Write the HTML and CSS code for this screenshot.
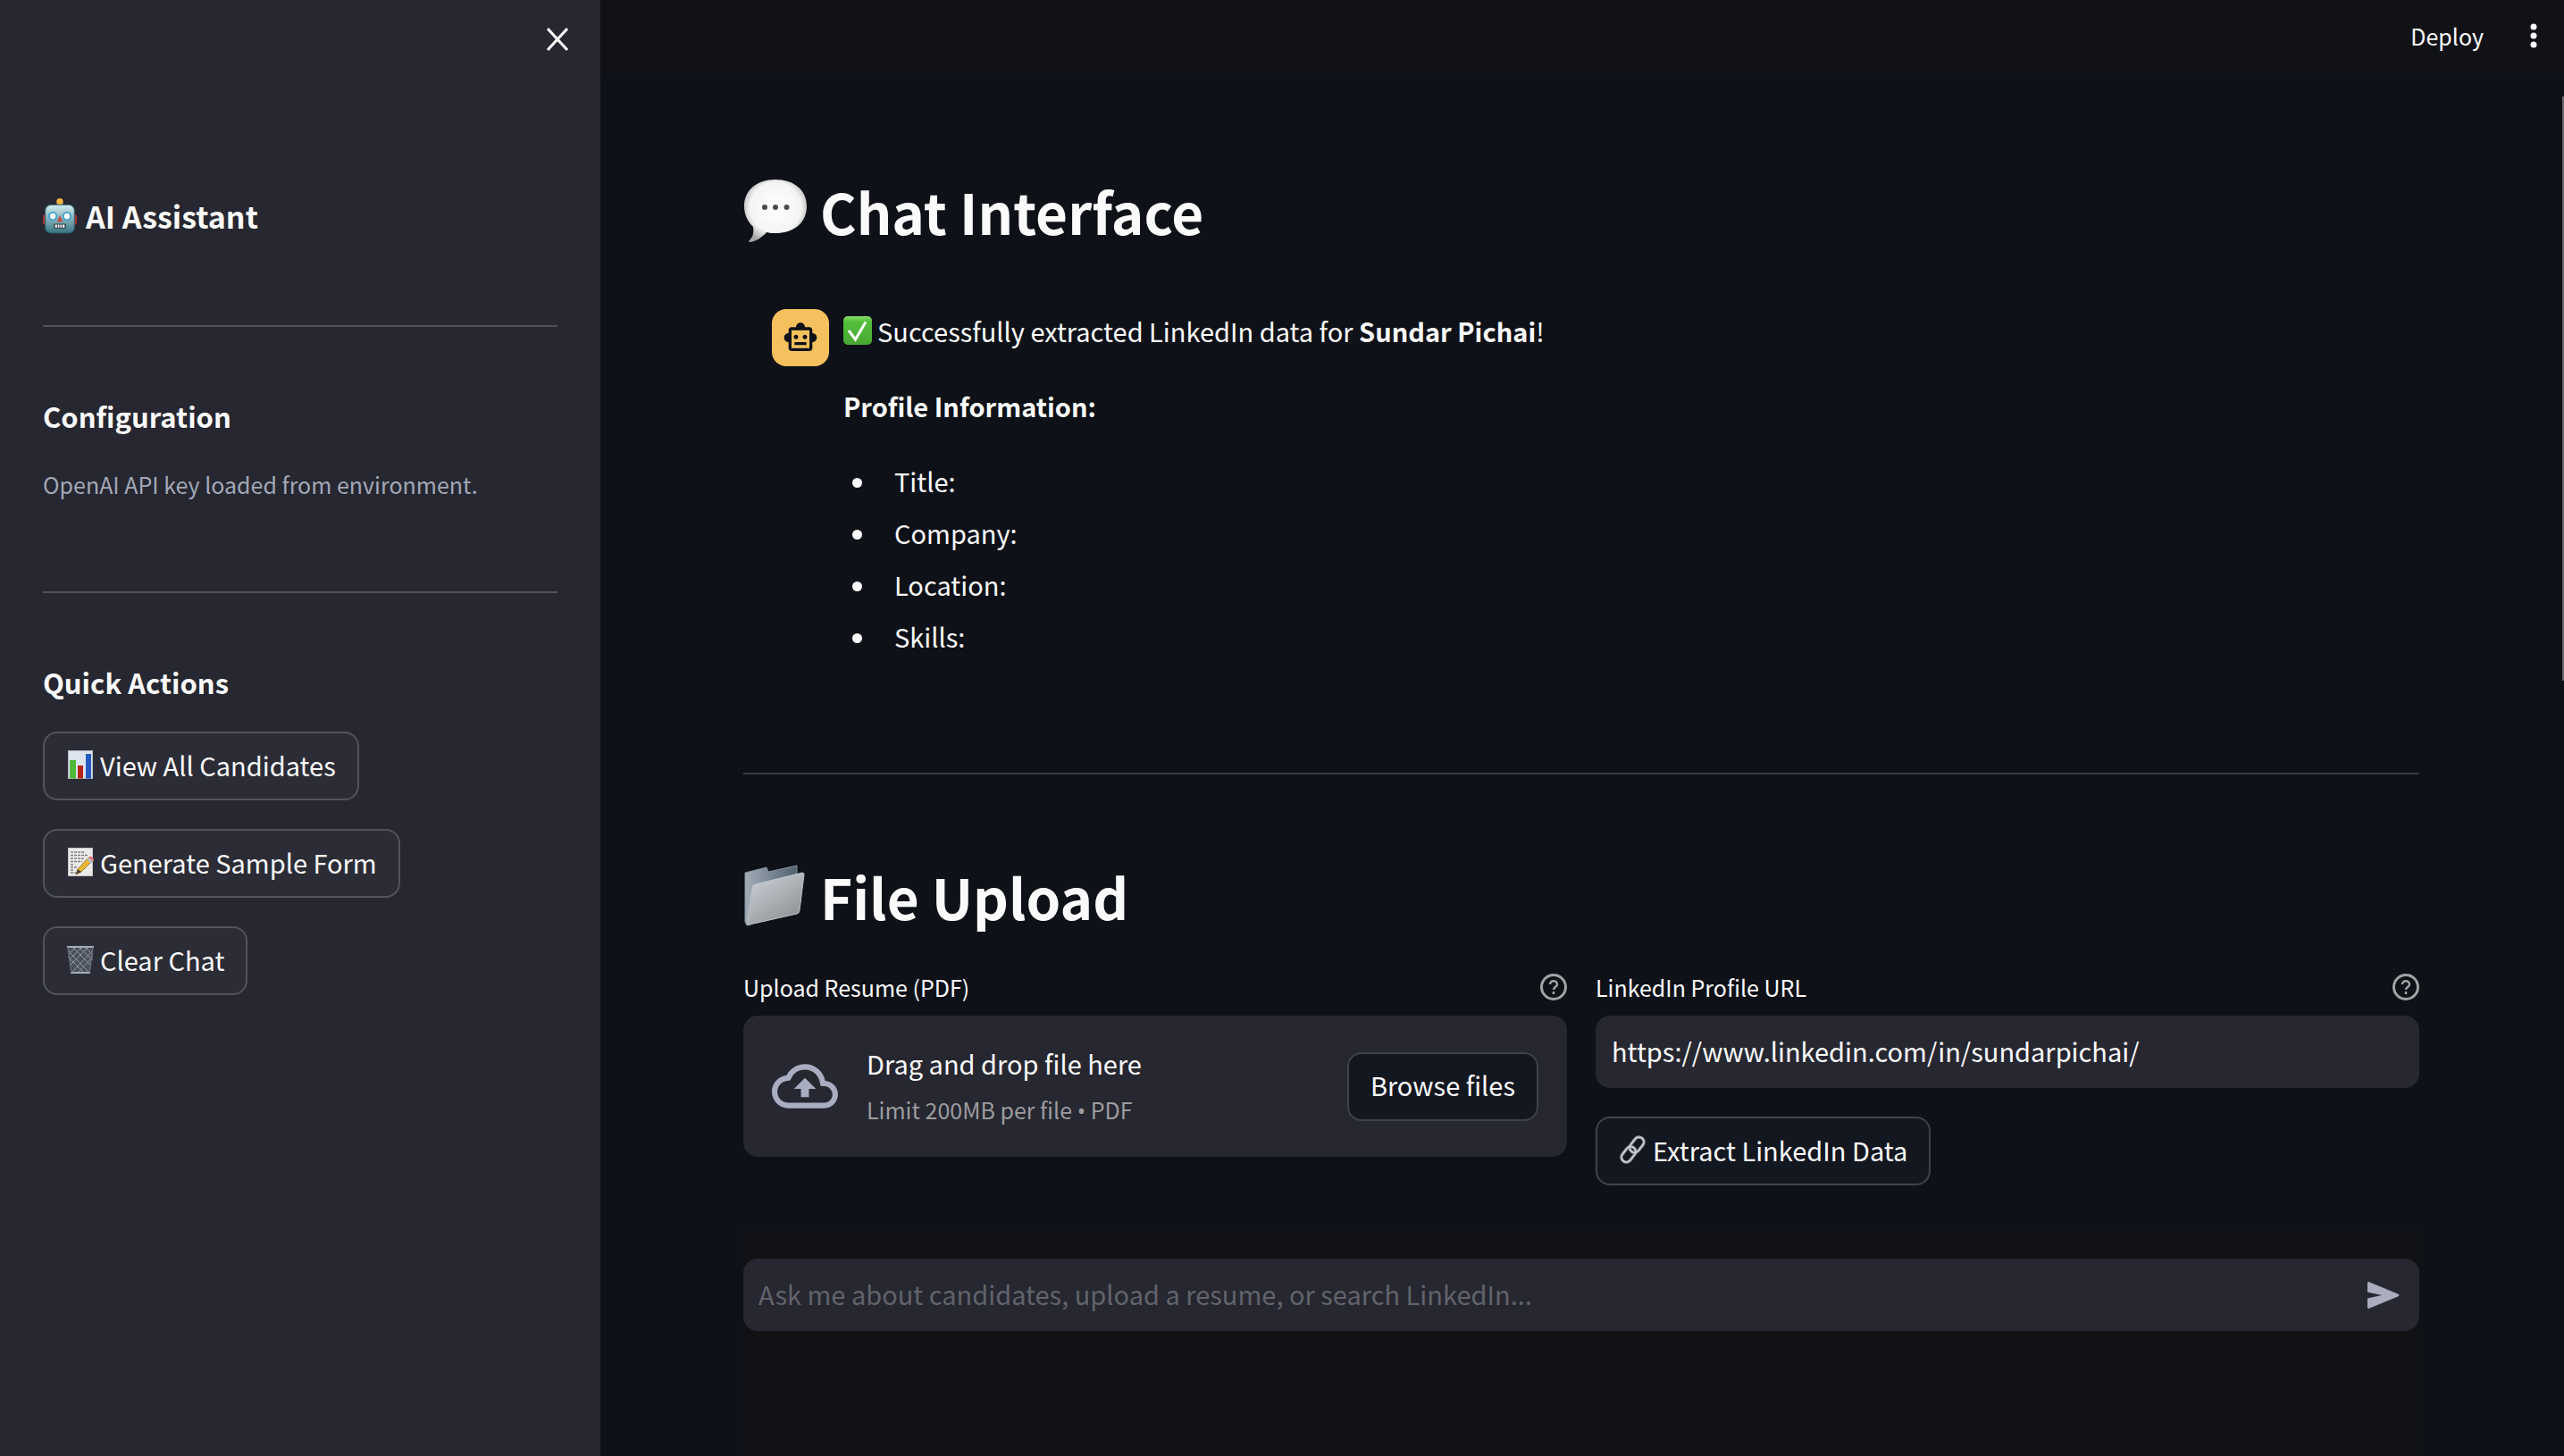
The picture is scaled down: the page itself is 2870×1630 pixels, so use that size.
FILE: index.html
```html
<!DOCTYPE html>
<html lang="en">
<head>
<meta charset="utf-8">
<title>Chat Interface</title>
<link rel="stylesheet" href="styles.css">
</head>
<body>
<div class="app">
  <aside class="sidebar">
    <div class="sidebar-top">
      <button class="icon-button" type="button" aria-label="Close sidebar">
        <svg class="icon-close" viewBox="0 0 24 26" fill="none" stroke="currentColor" stroke-width="3"><path d="M1 1l22 24M23 1L1 25"/></svg>
      </button>
    </div>
    <h2 class="brand">
      <svg class="emoji-brand" viewBox="0 0 36 38">
        <defs><linearGradient id="robot" x1="0" y1="0" x2="0" y2="1"><stop offset="0" stop-color="#d3edf0"/><stop offset=".45" stop-color="#8bb9c1"/><stop offset="1" stop-color="#37717f"/></linearGradient></defs>
        <rect x="0" y="17" width="5" height="11" rx="2" fill="#a63434"/><rect x="31" y="17" width="5" height="11" rx="2" fill="#a63434"/>
        <path d="M14 8V5h8v3z" fill="#60477f"/><circle cx="18" cy="3.500" r="3.500" fill="#f4b63d"/>
        <rect x="2.500" y="7" width="31" height="30" rx="6" fill="url(#robot)" stroke="#2c5c69"/>
        <g fill="#fff" stroke="#4aa5c9" stroke-width="2"><circle cx="10.500" cy="19" r="4"/><circle cx="25.500" cy="19" r="4"/></g>
        <path d="M18 18l3 7h-6z" fill="#c94c45"/><rect x="11.500" y="27" width="13" height="5" rx="1" fill="#33434a"/>
        <path d="M13 28h2v3h-2zM16 28h1.500v3H16zM18.500 28H20v3h-1.500zM21 28h2v3h-2z" fill="#fff"/>
      </svg>
      <span>AI Assistant</span>
    </h2>
    <hr class="rule">
    <h3 class="section-title">Configuration</h3>
    <p class="caption">OpenAI API key loaded from environment.</p>
    <hr class="rule">
    <h3 class="section-title">Quick Actions</h3>
    <div class="actions">
      <button class="button" type="button">
        <svg class="emoji" viewBox="0 0 32 32">
          <rect x="2.500" y=".500" width="27" height="31" fill="#dce4ee" stroke="#b5bcc7"/>
          <path d="M4 11h7v20.500H4z" fill="#50b93b"/><path d="M13 17h6v14.500h-6z" fill="#b22318"/><path d="M22 4h6v27.500h-6z" fill="#2459c0"/>
        </svg><span>View All Candidates</span>
      </button>
      <button class="button" type="button">
        <svg class="emoji" viewBox="0 0 32 32">
          <rect x="2.500" y=".500" width="27" height="31" fill="#ecebe9" stroke="#c4c4c4"/>
          <path d="M5 5h16M5 8.500h19M5 12h15M5 15.500h13M5 19h4M5 22h7M5 25h4M5 28h6" stroke="#808080" stroke-width="1.500" stroke-dasharray="3 1"/>
          <path d="M11 30l2-6L25 11l4 4-12 12z" fill="#edb92f" stroke="#8c6822" stroke-width=".800"/><path d="M11 30l2-6 4 3z" fill="#514334"/>
          <path d="M23 13l3-3 5 4-3 4z" fill="#b7bcc0"/><path d="M26 10c2-1 5 1 5 4l-1 1-5-4z" fill="#e97676"/>
        </svg><span>Generate Sample Form</span>
      </button>
      <button class="button" type="button">
        <svg class="emoji" viewBox="0 0 32 32">
          <path d="M1 2h30l-4 29H5z" fill="#4c515b"/>
          <path d="M3 7l22 23M2 13l17 17M8 3l20 20M15 3l15 14M22 3l8 8M29 7L7 30M30 13L14 30M24 3L4 23M17 3L3 17M10 3L3 10" stroke="#8e96a2" stroke-width="1"/>
          <path d="M1 2h30M5 31h22" stroke="#a3aebb" stroke-width="2"/><path d="M2 2l4 29M30 2l-4 29" stroke="#69717d" fill="none"/>
        </svg><span>Clear Chat</span>
      </button>
    </div>
  </aside>

  <div class="page">
    <header class="toolbar">
      <button class="deploy" type="button">Deploy</button>
      <button class="icon-button" type="button" aria-label="Menu">
        <svg class="icon-menu" viewBox="0 0 8 28" fill="currentColor"><circle cx="4" cy="4" r="3.500"/><circle cx="4" cy="14" r="3.500"/><circle cx="4" cy="24" r="3.500"/></svg>
      </button>
    </header>

    <main class="content">
      <h1 class="title">
        <svg class="emoji-title" viewBox="0 0 72 72">
          <defs><radialGradient id="bubble" cx=".5" cy=".45" r=".58"><stop offset="0" stop-color="#fff"/><stop offset=".7" stop-color="#f4f4f4"/><stop offset="1" stop-color="#a6a6a6"/></radialGradient></defs>
          <path d="M36 1C57 1 71 13 71 31S57 61 36 61c-3 0-7 0-10-1-5 6-12 10-18 11-2 0-2-1-1-2 4-4 5-9 4-15C5 48 1 40 1 31 1 13 15 1 36 1z" fill="url(#bubble)"/>
          <g fill="#4b4b4b"><circle cx="24" cy="32" r="3"/><circle cx="36" cy="32" r="3"/><circle cx="48.500" cy="32" r="3"/></g>
        </svg>
        <span>Chat Interface</span>
      </h1>

      <article class="message">
        <div class="avatar">
          <svg class="icon-bot" viewBox="0 0 24 24" fill="currentColor"><path d="M20 9V7c0-1.100-.9-2-2-2h-3c0-1.660-1.340-3-3-3S9 3.340 9 5H6c-1.100 0-2 .9-2 2v2c-1.660 0-3 1.340-3 3s1.340 3 3 3v4c0 1.100.9 2 2 2h12c1.100 0 2-.9 2-2v-4c1.660 0 3-1.340 3-3s-1.340-3-3-3zm-2 10H6V7h12v12zm-9-6c-.83 0-1.500-.67-1.500-1.500S8.170 10 9 10s1.500.67 1.500 1.500S9.830 13 9 13zm7.500-1.500c0 .83-.67 1.500-1.500 1.500s-1.500-.67-1.500-1.500.67-1.500 1.500-1.500 1.500.67 1.500 1.500zM8 15h8v2H8v-2z"/></svg>
        </div>
        <div class="message-body">
          <p class="with-emoji">
            <svg class="emoji" viewBox="0 0 32 32">
              <defs><linearGradient id="tick" x1="0" y1="0" x2="0" y2="1"><stop offset="0" stop-color="#8ade6c"/><stop offset=".2" stop-color="#52bf3b"/><stop offset="1" stop-color="#48a832"/></linearGradient></defs>
              <rect width="32" height="32" rx="5" fill="url(#tick)"/><path d="M6 16l7.500 10L25 6.500" fill="none" stroke="#fff" stroke-width="3"/>
            </svg>
            <span>Successfully extracted LinkedIn data for <strong>Sundar Pichai</strong>!</span>
          </p>
          <p><strong>Profile Information:</strong></p>
          <ul class="facts">
            <li>Title:</li>
            <li>Company:</li>
            <li>Location:</li>
            <li>Skills:</li>
          </ul>
        </div>
      </article>

      <hr class="rule">

      <h1 class="title">
        <svg class="emoji-title" viewBox="0 0 72 72">
          <defs><linearGradient id="folder" x1="0" y1="0" x2=".7" y2="1"><stop offset="0" stop-color="#d0d5dc"/><stop offset="1" stop-color="#8e9396"/></linearGradient><linearGradient id="folder-back" x1="0" y1="0" x2="1" y2="0"><stop offset="0" stop-color="#a2adb8"/><stop offset="1" stop-color="#51616f"/></linearGradient></defs>
          <path d="M2 10L26 4l2 5 32-7v12L8 68l-4 1-2-4z" fill="url(#folder-back)" stroke="#8594a1"/>
          <path d="M13 23l53-13q2 0 2 2l-5 40q0 3-3 4L7 68q-2 1-2-2l5-40q0-2 3-3z" fill="url(#folder)" stroke="#bdc3c8"/>
        </svg>
        <span>File Upload</span>
      </h1>

      <div class="columns">
        <section class="field">
          <div class="field-head">
            <label for="resume">Upload Resume (PDF)</label>
            <svg class="icon-help" viewBox="0 0 30 30" fill="none" stroke="currentColor" stroke-width="3"><circle cx="15" cy="15" r="13.500"/><path d="M11 12c0-5 8-5 8 0 0 3-4 3-4 6" stroke-width="2.500"/><path d="M15 20v3" stroke-width="2.500"/></svg>
          </div>
          <div class="dropzone">
            <svg class="icon-cloud" viewBox="0 4 24 16" fill="currentColor"><path d="M19.350 10.040A7.490 7.490 0 0 0 12 4C9.110 4 6.600 5.640 5.350 8.040A5.994 5.994 0 0 0 0 14c0 3.310 2.690 6 6 6h13c2.760 0 5-2.240 5-5 0-2.640-2.050-4.780-4.650-4.960zM19 18H6c-2.210 0-4-1.790-4-4 0-2.050 1.530-3.760 3.560-3.970l1.070-.11.5-.95A5.469 5.469 0 0 1 12 6c2.620 0 4.880 1.860 5.390 4.430l.3 1.500 1.530.11A2.980 2.980 0 0 1 22 15c0 1.650-1.350 3-3 3zM8 13h2.550v3h2.900v-3H16l-4-4z"/></svg>
            <div class="drop-text">
              <span>Drag and drop file here</span>
              <small>Limit 200MB per file <span class="dot">•</span> PDF</small>
            </div>
            <button class="button" type="button" id="resume">Browse files</button>
          </div>
        </section>
        <section class="field">
          <div class="field-head">
            <label for="profile">LinkedIn Profile URL</label>
            <svg class="icon-help" viewBox="0 0 30 30" fill="none" stroke="currentColor" stroke-width="3"><circle cx="15" cy="15" r="13.500"/><path d="M11 12c0-5 8-5 8 0 0 3-4 3-4 6" stroke-width="2.500"/><path d="M15 20v3" stroke-width="2.500"/></svg>
          </div>
          <input class="text-input" id="profile" type="text" value="https://www.linkedin.com/in/sundarpichai/">
          <button class="button extract" type="button">
            <svg class="emoji" viewBox="0 0 32 32" fill="none">
              <g stroke="#8d9298" stroke-width="3.500"><rect x="15" y="1" width="11" height="19" rx="5.500" transform="rotate(38 20 10)"/><rect x="5" y="12" width="11" height="19" rx="5.500" transform="rotate(38 11 22)"/></g>
              <g stroke="#d9dde1" stroke-width="1.200"><rect x="15" y="1" width="11" height="19" rx="5.500" transform="rotate(38 20 10)"/><rect x="5" y="12" width="11" height="19" rx="5.500" transform="rotate(38 11 22)"/></g>
            </svg><span>Extract LinkedIn Data</span>
          </button>
        </section>
      </div>
    </main>

    <footer class="composer">
      <form class="composer-box">
        <input class="composer-input" type="text" aria-label="Message" placeholder="Ask me about candidates, upload a resume, or search LinkedIn...">
        <button class="icon-button send" type="button" aria-label="Send">
          <svg class="icon-send" viewBox="0 0 36 30" fill="currentColor"><path d="M0 1.500Q0-.5 2 .3L34 13.500q3 1.500 0 3L2 29.700Q0 30.500 0 28.500V18.500l16-3.500L0 11.500z"/></svg>
        </button>
      </form>
    </footer>
    <div class="scroll-thumb"></div>
  </div>
</div>
</body>
</html>
```
FILE: styles.css
```css
* { box-sizing: border-box; }

body {
  margin: 0;
  background: #0e1117;
  color: #fafafa;
  font-family: "Noto Sans CJK SC", "Noto Sans", sans-serif;
  font-size: 29px;
  line-height: 48px;
}

h1, h2, h3, p, ul { margin: 0; }

button, input {
  font: inherit;
  color: inherit;
}

button {
  border: 0;
  padding: 0;
  background: none;
}

svg { display: block; flex: none; }

.app {
  display: flex;
  min-height: 100vh;
}

/* Sidebar */
.sidebar {
  flex: none;
  width: 672px;
  padding: 0 48px;
  background: #262730;
}

.sidebar-top {
  display: flex;
  justify-content: flex-end;
  align-items: center;
  height: 88px;
  margin-right: -12px;
}

.icon-button { display: flex; }
.icon-close { width: 24px; height: 26px; }

.brand {
  display: flex;
  align-items: center;
  gap: 10px;
  margin-top: 128px;
  font-size: 34px;
  line-height: 52px;
  font-weight: 700;
}

.emoji-brand { width: 38px; height: 42px; }

.rule {
  height: 2px;
  margin: 96px 0 76px;
  border: 0;
  background: #505159;
}

.section-title {
  font-size: 31px;
  line-height: 48px;
  font-weight: 700;
}

.caption {
  margin-top: 28px;
  color: #a3a8b8;
  font-size: 25px;
  line-height: 48px;
}

.actions {
  display: flex;
  flex-direction: column;
  align-items: flex-start;
  gap: 32px;
  margin-top: 31px;
}

.button {
  display: flex;
  align-items: center;
  gap: 6px;
  height: 77px;
  padding: 0 24px 4px;
  border: 2px solid #52535b;
  border-radius: 16px;
  background: #2b2c36;
  white-space: nowrap;
}

.emoji { width: 32px; height: 32px; }

/* Page */
.page {
  position: relative;
  flex: 1;
  display: flex;
  flex-direction: column;
  min-width: 0;
}

.toolbar {
  display: flex;
  justify-content: flex-end;
  align-items: center;
  gap: 52px;
  height: 84px;
  padding: 0 30px 4px 0;
  background: #111216;
}

.deploy { font-size: 25px; }
.icon-menu { width: 8px; height: 28px; }

.content {
  flex: 1;
  padding: 100px 162px 0 160px;
}

.title {
  display: flex;
  align-items: center;
  gap: 14px;
  font-size: 62px;
  line-height: 104px;
  font-weight: 700;
}

.emoji-title { width: 72px; height: 72px; }

.message {
  display: flex;
  gap: 16px;
  padding: 58px 32px 33px;
}

.avatar {
  display: flex;
  align-items: center;
  justify-content: center;
  flex: none;
  width: 64px;
  height: 64px;
  border-radius: 16px;
  background: #f5c05e;
  color: #0e1117;
}

.icon-bot { width: 40px; height: 40px; }

.message-body {
  display: flex;
  flex-direction: column;
  gap: 36px;
}

.with-emoji {
  display: flex;
  align-items: center;
  gap: 6px;
}

.facts {
  display: grid;
  gap: 10px;
  padding-left: 39px;
}

.facts li { padding-left: 18px; }

.content .rule {
  margin-bottom: 84px;
  background: #3a3c42;
}

.columns {
  display: grid;
  grid-template-columns: 1fr 1fr;
  gap: 32px;
  margin-top: 26px;
}

.field-head {
  display: flex;
  justify-content: space-between;
  align-items: center;
  height: 48px;
  margin-bottom: 8px;
  font-size: 25px;
}

.icon-help { width: 30px; height: 30px; color: #a3a3a6; }

.dropzone {
  display: flex;
  align-items: center;
  gap: 32px;
  height: 158px;
  padding: 0 32px;
  border-radius: 16px;
  background: #262730;
}

.icon-cloud { width: 74px; height: 50px; color: #a9adc1; }

.drop-text {
  flex: 1;
  display: flex;
  flex-direction: column;
  line-height: 52px;
}

.drop-text small {
  color: #9c9c9f;
  font-size: 25px;
}

.dot { font-family: "Noto Sans", sans-serif; }

.content .button {
  border-color: #41434a;
  background: #131720;
}

.text-input {
  display: block;
  width: 100%;
  height: 81px;
  padding: 0 18px 4px;
  border: 0;
  border-radius: 16px;
  background: #262730;
}

.extract { margin-top: 32px; }

.composer {
  margin: 0 162px 0 160px;
  padding: 32px 0 140px;
  background: #111216;
}

.composer-box {
  display: flex;
  align-items: center;
  height: 81px;
  padding: 0 22px 0 17px;
  border-radius: 16px;
  background: #262730;
}

.composer-input {
  flex: 1;
  border: 0;
  padding: 0 0 4px;
  background: none;
}

.composer-input::placeholder { color: #62636b; }
.send { color: #a9adbd; }
.icon-send { width: 36px; height: 30px; }

.scroll-thumb {
  position: absolute;
  top: 108px;
  right: 0;
  width: 2px;
  height: 654px;
  background: #6b6b6f;
}
```
